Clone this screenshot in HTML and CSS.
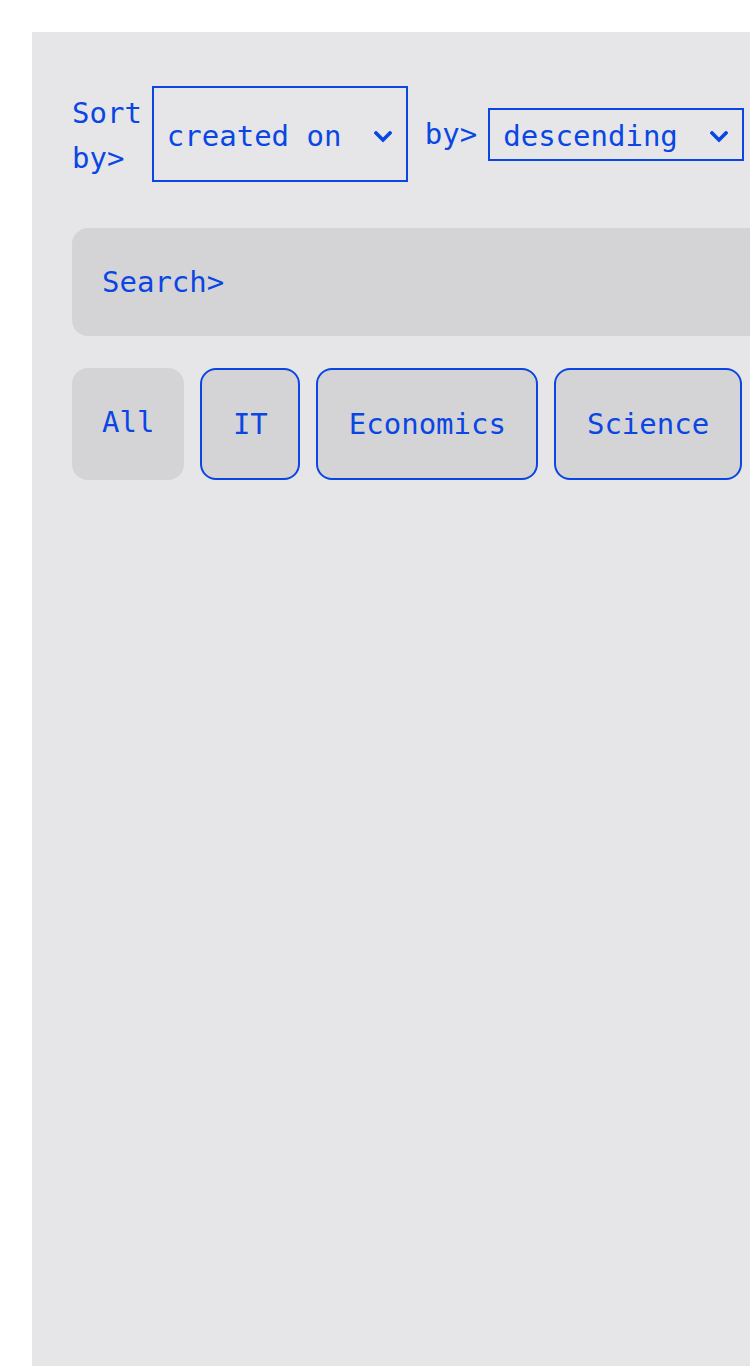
FILE: index.html
```html
<!DOCTYPE html>
<html lang="en">
<head>
<meta charset="utf-8">
<title>Filter</title>
<link rel="stylesheet" href="styles.css">
</head>
<body>
<main class="panel">
  <div class="sort-row">
    <div class="sort-group first">
      <span class="label wrap">Sort by&gt;</span>
      <div class="select tall">
        <span class="select-text">created on</span>
        <svg class="chevron" width="18" height="12" viewBox="0 0 18 12"><path d="M2 2 L9 9 L16 2" fill="none" stroke="currentColor" stroke-width="3.6" stroke-linecap="square"/></svg>
      </div>
    </div>
    <div class="sort-group second">
      <span class="label">by&gt;</span>
      <div class="select">
        <span class="select-text">descending</span>
        <svg class="chevron" width="18" height="12" viewBox="0 0 18 12"><path d="M2 2 L9 9 L16 2" fill="none" stroke="currentColor" stroke-width="3.6" stroke-linecap="square"/></svg>
      </div>
    </div>
  </div>
  <div class="search">Search&gt;</div>
  <div class="chips">
    <button class="chip active">All</button>
    <button class="chip">IT</button>
    <button class="chip">Economics</button>
    <button class="chip">Science</button>
  </div>
</main>
</body>
</html>
```
FILE: styles.css
```css
html, body {
  margin: 0;
  padding: 0;
  background: #ffffff;
}
body {
  padding: 32px 0 0 32px;
  overflow: hidden;
  height: 1366px;
  box-sizing: border-box;
}
.panel {
  background: #e6e6e9;
  min-height: 1334px;
  width: 900px;
  box-sizing: border-box;
  padding: 54px 40px 40px 40px;
  font-family: "DejaVu Sans Mono", "Liberation Mono", monospace;
  font-size: 29px;
  color: #0a46e4;
}
.sort-row {
  display: flex;
  align-items: center;
  gap: 17px;
}
.sort-group {
  display: flex;
  align-items: center;
  gap: 10px;
}
.sort-group.second {
  gap: 11px;
}
.sort-group.first {
  align-items: stretch;
}
.label {
  line-height: 46px;
}
.label.wrap {
  width: 4ch;
  line-height: 45px;
  padding: 5px 0 1px;
}
.select {
  width: 256px;
  height: 53px;
  box-sizing: border-box;
  border: 2px solid #0a46e4;
  display: flex;
  align-items: center;
  justify-content: space-between;
  padding: 0 14px 0 13px;
}
.select.tall {
  height: auto;
}
.select-text {
  line-height: 40px;
  padding-top: 3px;
}
.chevron {
  display: block;
  color: #0a46e4;
  margin-top: 5px;
}
.search {
  margin-top: 46px;
  height: 108px;
  box-sizing: border-box;
  background: #d4d4d7;
  border-radius: 16px;
  padding: 0 30px;
  display: flex;
  align-items: center;
  line-height: 40px;
}
.chips {
  margin-top: 32px;
  display: flex;
  gap: 16px;
}
.chip {
  font: inherit;
  color: inherit;
  background: #d4d4d7;
  border: 2px solid #0a46e4;
  border-radius: 16px;
  height: 112px;
  box-sizing: border-box;
  padding: 0 30.5px;
  line-height: 40px;
  margin: 0;
}
.chip.active {
  border: none;
  padding: 0 30px 4px;
}
```
